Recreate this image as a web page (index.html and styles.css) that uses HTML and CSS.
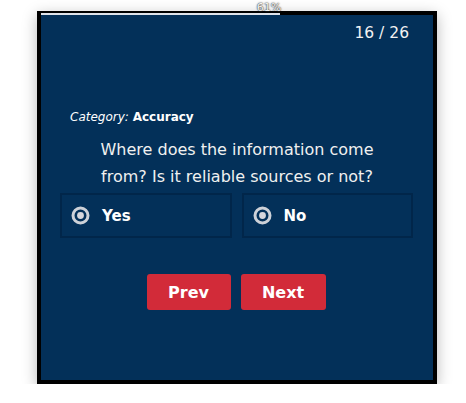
FILE: index.html
```html
<!DOCTYPE html>
<html>
<head>
<meta charset="utf-8">
<link rel="stylesheet" href="styles.css">
</head>
<body>
<div class="card">
  <div class="progress"><div class="progress-fill" style="width:61%"><span class="progress-label">61%</span></div></div>
  <div class="counter">16 / 26</div>
  <div class="category"><em>Category:</em> <strong>Accuracy</strong></div>
  <div class="question">Where does the information come<br>from? Is it reliable sources or not?</div>
  <div class="options">
    <div class="option">
      <svg class="radio" width="19" height="19" viewBox="0 0 19 19"><circle cx="9.5" cy="9.5" r="7.5" fill="none" stroke="#cdd1d8" stroke-width="3"/><circle cx="9.5" cy="9.5" r="3.4" fill="#d6d6dc"/></svg>
      <span>Yes</span>
    </div>
    <div class="option">
      <svg class="radio" width="19" height="19" viewBox="0 0 19 19"><circle cx="9.5" cy="9.5" r="7.5" fill="none" stroke="#cdd1d8" stroke-width="3"/><circle cx="9.5" cy="9.5" r="3.4" fill="#d6d6dc"/></svg>
      <span>No</span>
    </div>
  </div>
  <div class="nav">
    <button class="btn btn-prev">Prev</button>
    <button class="btn btn-next">Next</button>
  </div>
</div>
</body>
</html>
```

FILE: styles.css
```css
html, body {
  margin: 0;
  padding: 0;
  background: #ffffff;
}
body {
  font-family: "DejaVu Sans", Verdana, sans-serif;
  padding: 11px 0 0 37px;
}
.card {
  position: relative;
  width: 392px;
  height: 365px;
  border: 4px solid #000;
  background: #033059;
  box-shadow: 0 4px 14px rgba(0, 0, 0, 0.28);
  color: #fff;
}
.progress {
  position: absolute;
  left: 0;
  right: 0;
  top: -2px;
  height: 2px;
}
.progress-fill {
  position: relative;
  height: 2px;
  background: #dfe3ea;
}
.progress-label {
  position: absolute;
  right: -1px;
  bottom: 2px;
  font-size: 11px;
  line-height: 11px;
  color: #f4f4f4;
  text-shadow: 0 0 2px #333, 0 0 1px #333;
}
.counter {
  padding: 9px 24px 0 0;
  text-align: right;
  font-size: 15.5px;
  line-height: 18px;
  color: #f2f2f2;
}
.category {
  margin-top: 68px;
  padding-left: 29px;
  font-size: 12px;
  line-height: 15px;
}
.category em {
  font-style: italic;
}
.category strong {
  font-weight: bold;
}
.question {
  margin-top: 11px;
  text-align: center;
  font-size: 16px;
  line-height: 27px;
  color: #f0f0f0;
}
.options {
  margin-top: 3px;
  padding: 0 20px 0 19px;
  display: grid;
  grid-template-columns: 1fr 1fr;
  gap: 10px;
}
.option {
  height: 41px;
  border: 2px solid #01264a;
  display: flex;
  align-items: center;
  padding-left: 9px;
  font-size: 15px;
  font-weight: bold;
}
.radio {
  margin-right: 12px;
}
.nav {
  margin-top: 36px;
  padding-right: 2px;
  display: flex;
  justify-content: center;
  gap: 10px;
}
.btn {
  height: 36px;
  border: none;
  border-radius: 3px;
  background: #d22b39;
  color: #fff;
  font-family: "DejaVu Sans", Verdana, sans-serif;
  font-size: 16px;
  font-weight: bold;
  padding: 0;
}
.btn-prev { width: 84px; }
.btn-next { width: 85px; }
```
